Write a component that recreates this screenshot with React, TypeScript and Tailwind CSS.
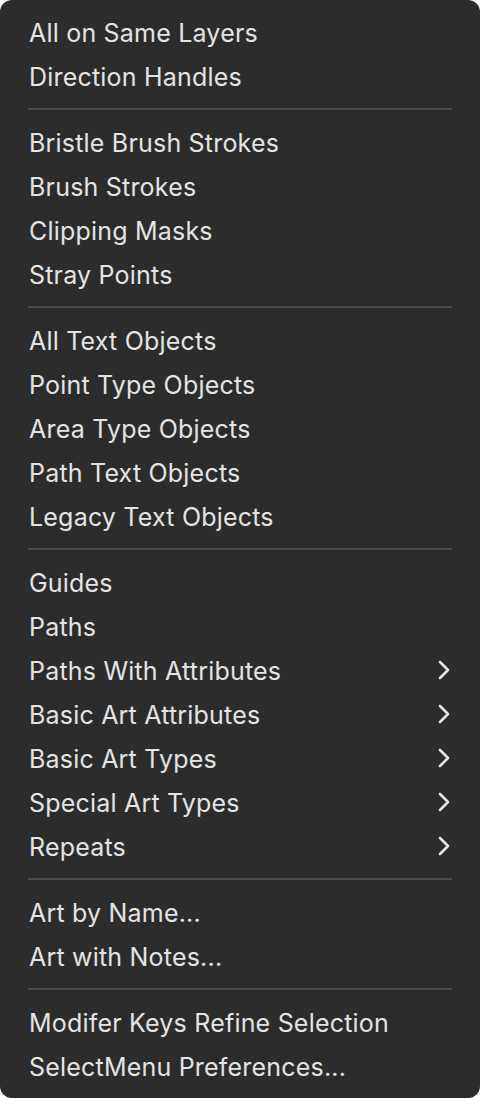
import React from "react";

type Entry = { label: string; sub?: boolean } | "sep";

const items: Entry[] = [
  { label: "All on Same Layers" },
  { label: "Direction Handles" },
  "sep",
  { label: "Bristle Brush Strokes" },
  { label: "Brush Strokes" },
  { label: "Clipping Masks" },
  { label: "Stray Points" },
  "sep",
  { label: "All Text Objects" },
  { label: "Point Type Objects" },
  { label: "Area Type Objects" },
  { label: "Path Text Objects" },
  { label: "Legacy Text Objects" },
  "sep",
  { label: "Guides" },
  { label: "Paths" },
  { label: "Paths With Attributes", sub: true },
  { label: "Basic Art Attributes", sub: true },
  { label: "Basic Art Types", sub: true },
  { label: "Special Art Types", sub: true },
  { label: "Repeats", sub: true },
  "sep",
  { label: "Art by Name..." },
  { label: "Art with Notes..." },
  "sep",
  { label: "Modifer Keys Refine Selection" },
  { label: "SelectMenu Preferences..." },
];

function Chevron() {
  return (
    <svg width="12" height="20" viewBox="0 0 12 20" fill="none">
      <path
        d="M2 2l8 8-8 8"
        stroke="#e4e4e4"
        strokeWidth="2.6"
        strokeLinecap="round"
        strokeLinejoin="round"
      />
    </svg>
  );
}

export default function App() {
  return (
    <div className="w-[480px] h-[1098px] bg-white">
      <div className="h-full rounded-[12px] bg-[#2c2c2c] py-[10px] px-[28px] font-['Inter','Noto_Sans',sans-serif] text-[25px] text-[#e4e4e4] tracking-[0.2px]">
        {items.map((it, i) =>
          it === "sep" ? (
            <div key={i} className="h-[22px] flex items-center">
              <div className="w-full h-[2px] bg-[#494949]" />
            </div>
          ) : (
            <div key={i} className="h-[44px] flex items-center justify-between pl-[1px]">
              <span className="pt-[4px]">{it.label}</span>
              {it.sub && (
                <span className="mr-[2px] flex">
                  <Chevron />
                </span>
              )}
            </div>
          )
        )}
      </div>
    </div>
  );
}
